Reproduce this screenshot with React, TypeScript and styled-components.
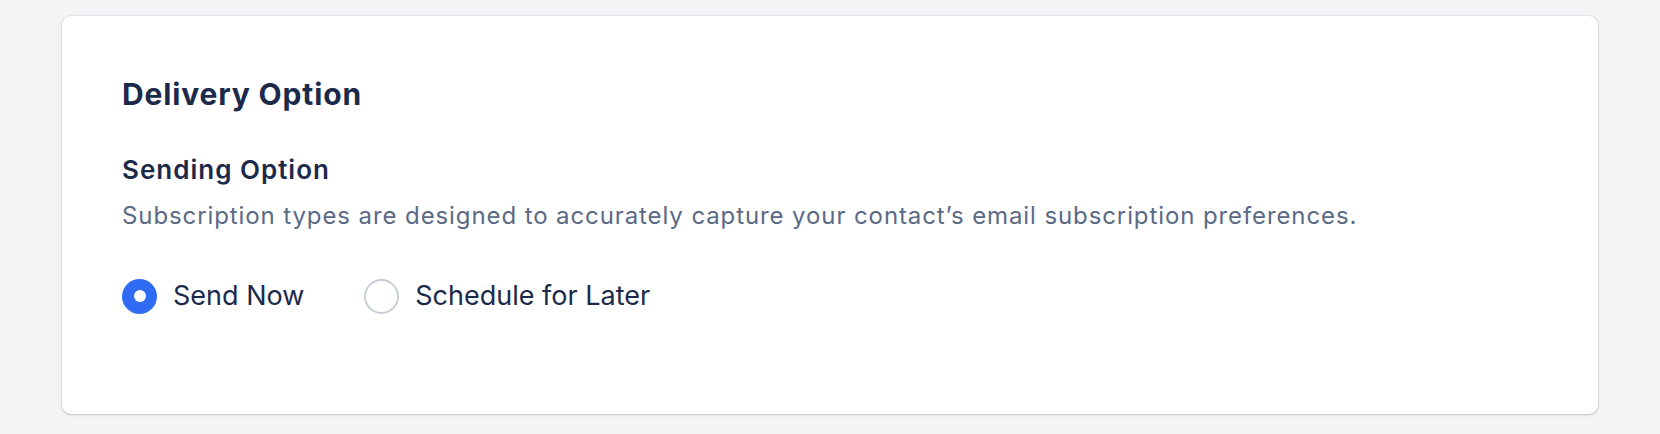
import * as React from 'react';
import styled, { createGlobalStyle } from 'styled-components';

const INK = '#1b2a4b';
const MUTED = '#5a6a85';
const BLUE = '#2f6cf3';

const GlobalStyle = createGlobalStyle`
  html, body {
    margin: 0;
    padding: 0;
    background: #f3f4f6;
  }
  body {
    font-family: Inter, 'Noto Sans', 'Liberation Sans', sans-serif;
    -webkit-font-smoothing: antialiased;
  }
`;

const Page = styled.div`
  display: flex;
  justify-content: center;
  padding: 16px 62px 20px;
`;

const Card = styled.section`
  flex: 1;
  max-width: 1536px;
  box-sizing: border-box;
  min-height: 398px;
  padding: 60px;
  background: #fff;
  border-radius: 9px;
  box-shadow: 0 0 0 1px rgba(17, 24, 39, 0.05), 0 1px 3px rgba(17, 24, 39, 0.14),
    0 1px 2px rgba(17, 24, 39, 0.06);
`;

const Title = styled.h2`
  margin: 0;
  font-size: 30px;
  line-height: 36px;
  font-weight: 700;
  color: ${INK};
  letter-spacing: 0.85px;
`;

const Field = styled.div`
  margin-top: 42px;
`;

const Label = styled.h3`
  margin: 0;
  font-size: 26px;
  line-height: 32px;
  font-weight: 600;
  color: ${INK};
  letter-spacing: 1px;
`;

const Help = styled.p`
  margin: 14px 0 0;
  font-size: 24px;
  line-height: 32px;
  font-weight: 400;
  color: ${MUTED};
  letter-spacing: 0.9px;
`;

const Options = styled.div`
  display: flex;
  align-items: center;
  gap: 60px;
  margin-top: 46px;
`;

const Option = styled.label`
  display: flex;
  align-items: center;
  gap: 16px;
  cursor: pointer;
  font-size: 27px;
  line-height: 36px;
  color: ${INK};
`;

const Dot = styled.span<{ $checked: boolean }>`
  flex: none;
  width: 35px;
  height: 35px;
  box-sizing: border-box;
  border-radius: 50%;
  display: flex;
  align-items: center;
  justify-content: center;
  background: ${(p) => (p.$checked ? BLUE : '#fff')};
  border: ${(p) => (p.$checked ? 'none' : '2px solid #c8cdd6')};

  &::after {
    content: '';
    display: ${(p) => (p.$checked ? 'block' : 'none')};
    width: 12px;
    height: 12px;
    border-radius: 50%;
    background: #fff;
  }
`;

const HiddenInput = styled.input`
  position: absolute;
  opacity: 0;
  width: 0;
  height: 0;
`;

const choices = [
  { id: 'now', label: 'Send Now' },
  { id: 'later', label: 'Schedule for Later' },
];

export default function App(): JSX.Element {
  const [mode, setMode] = React.useState('now');

  return (
    <>
      <GlobalStyle />
      <Page>
        <Card>
          <Title>Delivery Option</Title>
          <Field>
            <Label>Sending Option</Label>
            <Help>
              Subscription types are designed to accurately capture your contact’s email
              subscription preferences.
            </Help>
            <Options>
              {choices.map((c) => (
                <Option key={c.id}>
                  <HiddenInput
                    type="radio"
                    name="sending"
                    checked={mode === c.id}
                    onChange={() => setMode(c.id)}
                  />
                  <Dot $checked={mode === c.id} />
                  {c.label}
                </Option>
              ))}
            </Options>
          </Field>
        </Card>
      </Page>
    </>
  );
}
